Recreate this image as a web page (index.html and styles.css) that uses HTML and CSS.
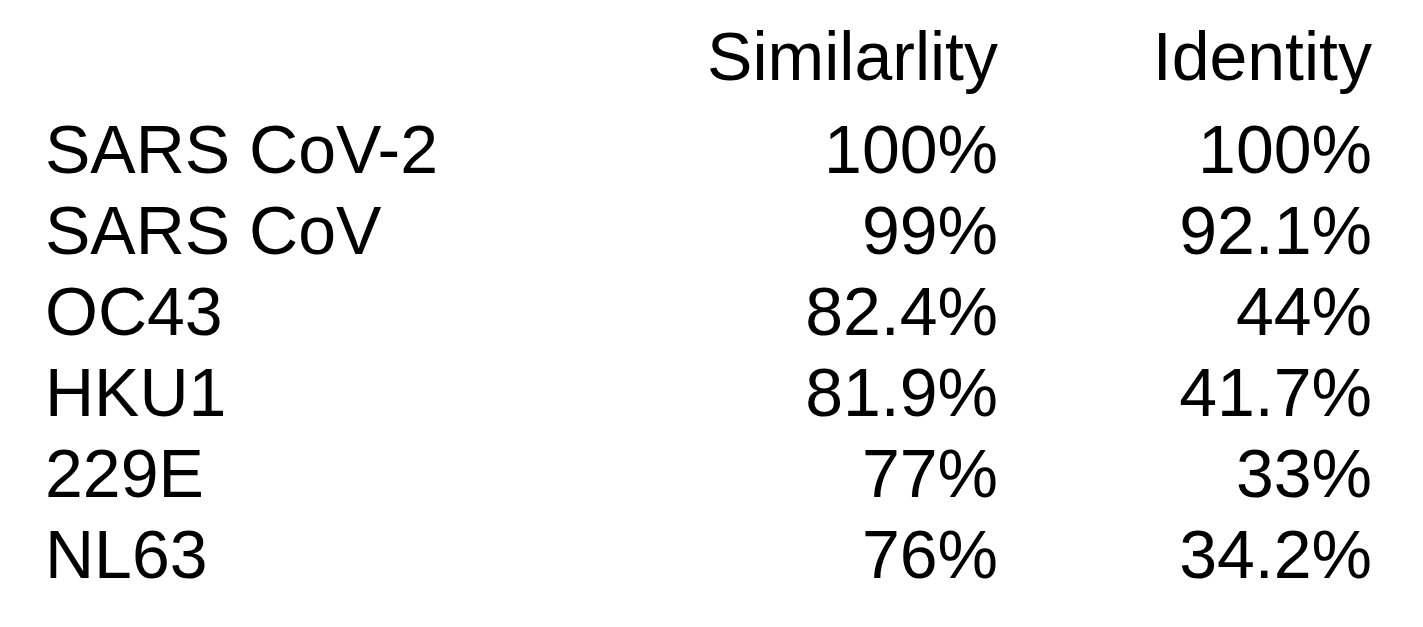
FILE: index.html
```html
<!DOCTYPE html>
<html lang="en">
<head>
<meta charset="utf-8">
<title>Coronavirus similarity</title>
<link rel="stylesheet" href="styles.css">
</head>
<body>
<div class="table">
  <div class="row head">
    <div class="name"></div>
    <div class="num">Similarlity</div>
    <div class="num">Identity</div>
  </div>
  <div class="row"><div class="name">SARS CoV-2</div><div class="num">100%</div><div class="num">100%</div></div>
  <div class="row"><div class="name">SARS CoV</div><div class="num">99%</div><div class="num">92.1%</div></div>
  <div class="row"><div class="name">OC43</div><div class="num">82.4%</div><div class="num">44%</div></div>
  <div class="row"><div class="name">HKU1</div><div class="num">81.9%</div><div class="num">41.7%</div></div>
  <div class="row"><div class="name">229E</div><div class="num">77%</div><div class="num">33%</div></div>
  <div class="row"><div class="name">NL63</div><div class="num">76%</div><div class="num">34.2%</div></div>
</div>
</body>
</html>
```
FILE: styles.css
```css
html, body {
  margin: 0;
  padding: 0;
  background: #ffffff;
}
body {
  width: 1423px;
  height: 627px;
  overflow: hidden;
  font-family: "Liberation Sans", Arial, sans-serif;
  color: #000000;
}
.table {
  display: flex;
  flex-direction: column;
  padding: 16px 0 0 45px;
}
.row {
  display: grid;
  grid-template-columns: 560px 393px 374px;
  font-size: 68px;
  line-height: 81px;
  height: 81px;
}
.row.head {
  margin-bottom: 12px;
}
.name {
  text-align: left;
  white-space: nowrap;
}
.num {
  text-align: right;
  white-space: nowrap;
}
```
